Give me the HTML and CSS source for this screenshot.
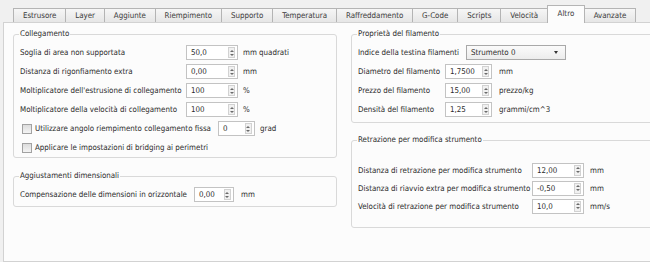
FILE: index.html
```html
<!DOCTYPE html>
<html>
<head>
<meta charset="UTF-8" />
<title>Impostazioni - Altro</title>
<link rel="stylesheet" href="styles.css">
</head>
<body>
<div class="tabs">
<div class="tab">Estrusore</div>
<div class="tab">Layer</div>
<div class="tab">Aggiunte</div>
<div class="tab">Riempimento</div>
<div class="tab">Supporto</div>
<div class="tab">Temperatura</div>
<div class="tab">Raffreddamento</div>
<div class="tab">G-Code</div>
<div class="tab">Scripts</div>
<div class="tab">Velocità</div>
<div class="tab active">Altro</div>
<div class="tab">Avanzate</div>
</div>
<div class="pane">
<div class="col left">
<fieldset class="group link">
<legend>Collegamento</legend>
<div class="grid">
<label>Soglia di area non supportata</label><span class="spin"><span class="val">50,0</span><span class="arrows"></span></span><span class="unit">mm quadrati</span>
<label>Distanza di rigonfiamento extra</label><span class="spin"><span class="val">0,00</span><span class="arrows"></span></span><span class="unit">mm</span>
<label>Moltiplicatore dell'estrusione di collegamento</label><span class="spin"><span class="val">100</span><span class="arrows"></span></span><span class="unit">%</span>
<label>Moltiplicatore della velocità di collegamento</label><span class="spin"><span class="val">100</span><span class="arrows"></span></span><span class="unit">%</span>
</div>
<div class="check"><span class="box"></span><label>Utilizzare angolo riempimento collegamento fissa</label><span class="spin small"><span class="val">0</span><span class="arrows"></span></span><span class="unit">grad</span></div>
<div class="check"><span class="box"></span><label>Applicare le impostazioni di bridging ai perimetri</label></div>
</fieldset>
<fieldset class="group dims">
<legend>Aggiustamenti dimensionali</legend>
<div class="line"><label>Compensazione delle dimensioni in orizzontale</label><span class="spin narrow"><span class="val">0,00</span><span class="arrows"></span></span><span class="unit">mm</span></div>
</fieldset>
</div>
<div class="col right">
<fieldset class="group fil">
<legend>Proprietà del filamento</legend>
<div class="line"><label>Indice della testina filamenti</label><span class="combo">Strumento 0<span class="drop"></span></span></div>
<div class="grid">
<label>Diametro del filamento</label><span class="spin"><span class="val">1,7500</span><span class="arrows"></span></span><span class="unit">mm</span>
<label>Prezzo del filamento</label><span class="spin"><span class="val">15,00</span><span class="arrows"></span></span><span class="unit">prezzo/kg</span>
<label>Densità del filamento</label><span class="spin"><span class="val">1,25</span><span class="arrows"></span></span><span class="unit">grammi/cm^3</span>
</div>
</fieldset>
<fieldset class="group retr">
<legend>Retrazione per modifica strumento</legend>
<div class="grid">
<label>Distanza di retrazione per modifica strumento</label><span class="spin"><span class="val">12,00</span><span class="arrows"></span></span><span class="unit">mm</span>
<label>Distanza di riavvio extra per modifica strumento</label><span class="spin"><span class="val">-0,50</span><span class="arrows"></span></span><span class="unit">mm</span>
<label>Velocità di retrazione per modifica strumento</label><span class="spin"><span class="val">10,0</span><span class="arrows"></span></span><span class="unit">mm/s</span>
</div>
</fieldset>
</div>
</div>
</body>
</html>
```

FILE: styles.css
```css
body { margin: 0; background: #f0f0f0; color: #2b2b2b; font-family: "DejaVu Sans Condensed", "Liberation Sans", sans-serif; font-size: 7.9px; overflow: hidden; height: 262px; }
label, .unit, .tab, legend { white-space: nowrap; }

/* tab bar */
.tabs { display: flex; padding: 8px 0 0 13px; height: 14px; position: relative; z-index: 1; }
.tab { height: 13px; line-height: 13px; padding: 0 8.9px; border: 1px solid #b4b4b4; border-bottom: none; margin-right: -1px; background: linear-gradient(#f6f6f6, #e6e6e6); color: #3a3a3a; }
.tab.active { background: #fcfcfc; margin-top: -3px; height: 17px; line-height: 16px; padding: 0 9.5px; }

/* page */
.pane { margin-left: 3px; border: 1px solid #d2d2d2; border-right: none; background: #fcfcfc; height: 240px; display: flex; gap: 14px; padding: 5px 0 0 9px; box-sizing: border-box; }
.col { display: flex; flex-direction: column; }
.col.left { width: 324px; flex: none; }
.col.right { flex: 1; margin-right: -20px; }

.group { margin: 0; border: 1px solid #d9d9d9; border-radius: 3px; padding: 3px 6px 0; background: #fcfcfc; }
.group legend { padding: 0 1px; margin-left: -1px; line-height: 12px; height: 12px; }
.group.dims { margin-top: 12px; padding-bottom: 2px; }
.group.fil { padding-bottom: 3px; }
.group.retr { margin-top: 11px; padding-top: 15px; padding-bottom: 12px; }

.grid { display: grid; grid-template-columns: 166px 52px 1fr; grid-auto-rows: 19px; align-items: center; }
.grid .unit { margin-left: 5px; }
.fil .grid { grid-template-columns: 87px 47px 1fr; }
.fil .grid .unit { margin-left: 7px; }
.retr .grid { grid-template-columns: 174px 52px 1fr; grid-auto-rows: 18px; }
.retr .grid .unit { margin-left: 6px; }

.line { display: flex; align-items: center; height: 19px; }
.dims .line .spin { margin-left: 7px; }
.dims .line .unit { margin-left: 7px; }

/* spin boxes */
.spin { display: flex; align-items: center; justify-content: space-between; height: 15px; box-sizing: border-box; border: 1px solid #c3c3c3; background: #fff; padding: 0 2px 0 4px; }
.spin.small { width: 37px; margin-left: 7px; }
.spin.narrow { width: 40px; }
.arrows { width: 7px; height: 11px; box-sizing: border-box; border: 1px solid #d2d2d2; background: #f1f1f1; display: flex; flex-direction: column; align-items: center; justify-content: center; gap: 2px; }
.arrows::before, .arrows::after { content: ""; border-left: 2px solid transparent; border-right: 2px solid transparent; }
.arrows::before { border-bottom: 2px solid #6a6a6a; }
.arrows::after { border-top: 2px solid #6a6a6a; }

/* checkboxes */
.check { display: flex; align-items: center; height: 19px; padding-left: 2px; }
.check .box { width: 10px; height: 10px; box-sizing: border-box; border: 1px solid #a2a2a2; background: linear-gradient(#dcdcdc, #f4f4f4); margin-right: 3px; }
.check .unit { margin-left: 5px; }

/* combo */
.combo { display: flex; align-items: center; width: 100px; height: 15px; box-sizing: border-box; margin-left: 7px; border: 1px solid #a9a9a9; background: linear-gradient(#fbfbfb, #ececec); padding: 0 4px; position: relative; }
.drop { position: absolute; right: 7px; top: 5px; border-left: 2px solid transparent; border-right: 2px solid transparent; border-top: 3px solid #333; }
```
